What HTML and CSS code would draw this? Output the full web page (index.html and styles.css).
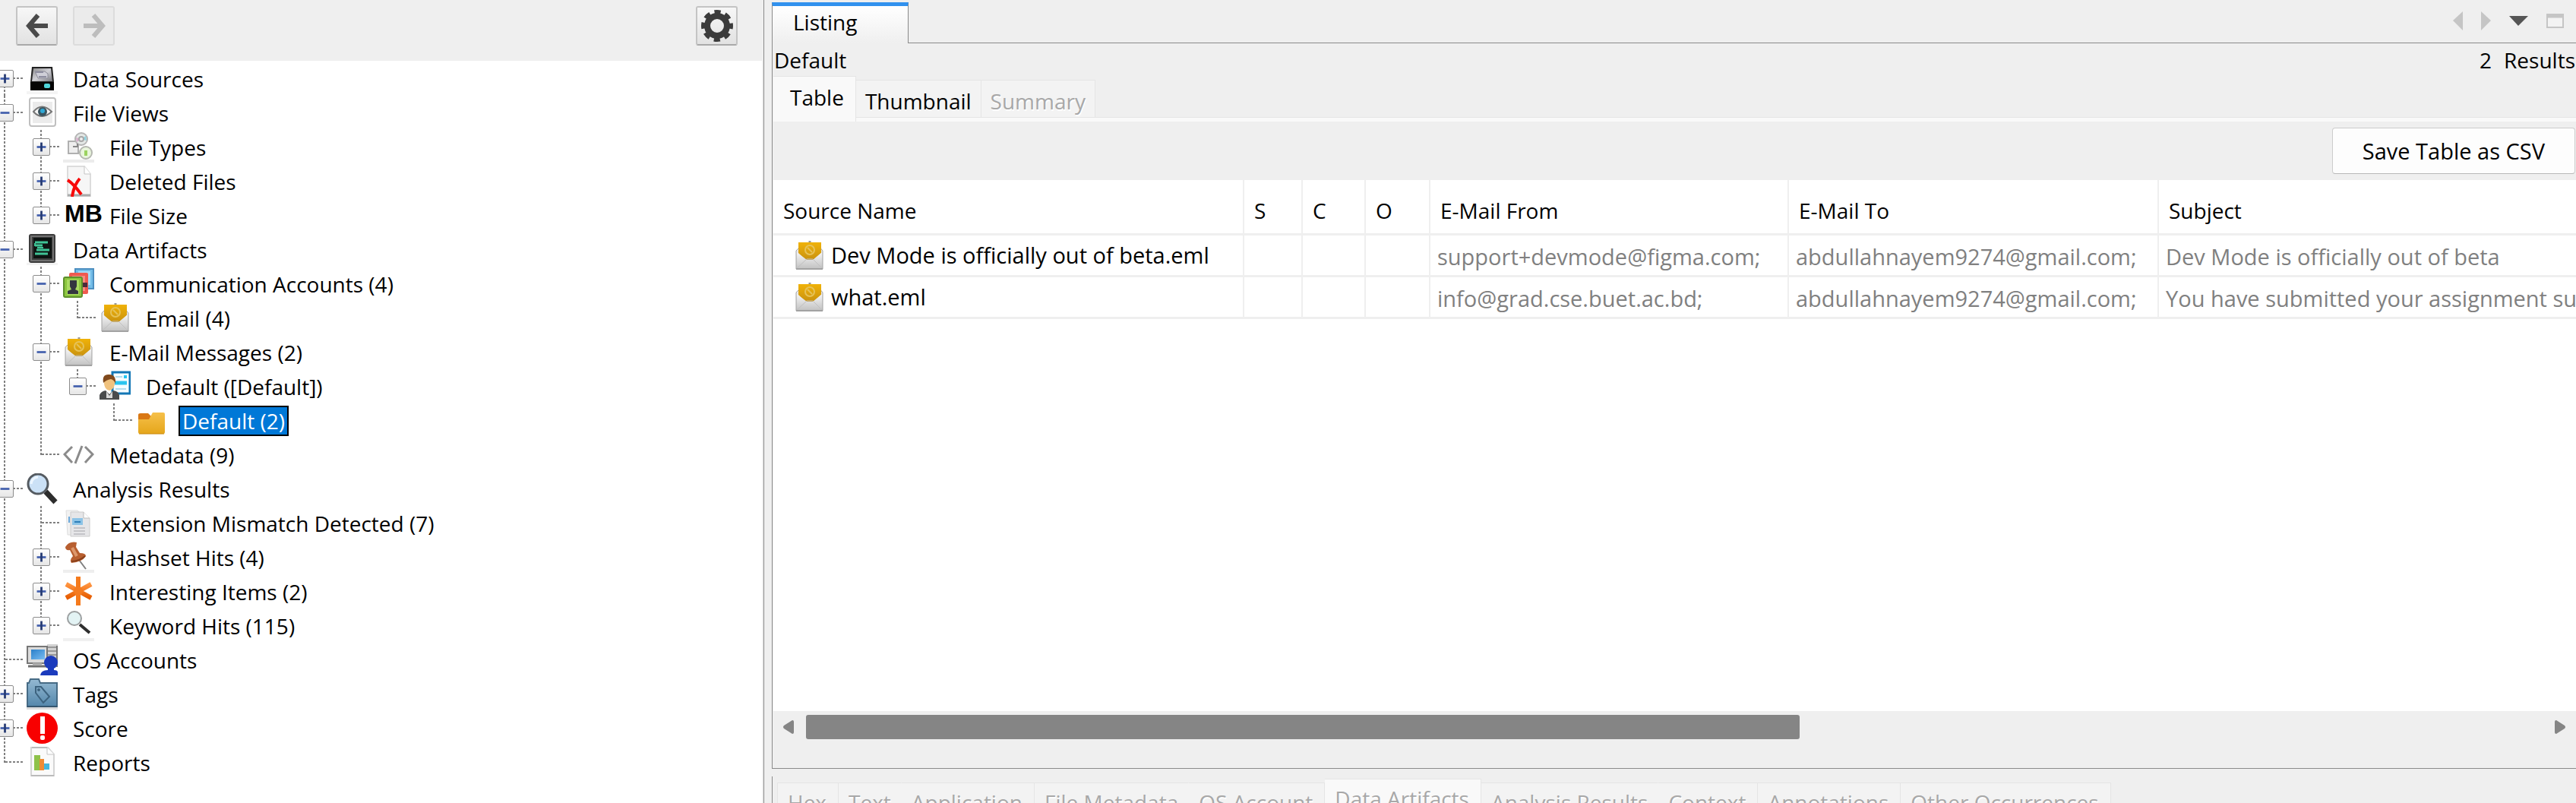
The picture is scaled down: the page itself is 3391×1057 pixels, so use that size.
FILE: index.html
```html
<!DOCTYPE html>
<html lang="en">
<head>
<meta charset="utf-8">
<meta name="viewport" content="width=device-width, initial-scale=1">
<title>Listing</title>
<link rel="stylesheet" href="styles.css">
</head>
<body>
<svg class="sprite" aria-hidden="true">
  <defs>
    <linearGradient id="g-steel" x1="0" y1="0" x2="0" y2="1"><stop offset="0" stop-color="#f6f6f6"/><stop offset="1" stop-color="#c4c4c4"/></linearGradient>
    <linearGradient id="g-gold" x1="0" y1="0" x2="0" y2="1"><stop offset="0" stop-color="#f0b208"/><stop offset="1" stop-color="#c99210"/></linearGradient>
    <linearGradient id="g-orange" x1="0" y1="0" x2="0" y2="1"><stop offset="0" stop-color="#ff9440"/><stop offset="1" stop-color="#e65c00"/></linearGradient>
    <linearGradient id="g-folder" x1="0" y1="0" x2="0" y2="1"><stop offset="0" stop-color="#f6c04a"/><stop offset="1" stop-color="#e5a61b"/></linearGradient>
    <linearGradient id="g-blue" x1="0" y1="0" x2="0" y2="1"><stop offset="0" stop-color="#94b9d2"/><stop offset="1" stop-color="#5487ab"/></linearGradient>
    <linearGradient id="g-drive" x1="0" y1="0" x2="1" y2="1"><stop offset="0" stop-color="#8e8e8e"/><stop offset="0.5" stop-color="#d0d0d6"/><stop offset="1" stop-color="#77777d"/></linearGradient>
    <linearGradient id="g-screen" x1="0" y1="0" x2="1" y2="1"><stop offset="0" stop-color="#2a7fc9"/><stop offset="1" stop-color="#79bdf2"/></linearGradient>
  </defs>
  <symbol id="plus" viewBox="0 0 23 23"><path d="M5 11.500h13" stroke="#4460ad" stroke-width="3"/><path d="M11.500 5v13" stroke="#253a72" stroke-width="3"/></symbol>
  <symbol id="minus" viewBox="0 0 23 23"><path d="M5 11.500h13" stroke="#4460ad" stroke-width="3"/></symbol>
  <symbol id="drive" viewBox="0 0 41 41">
    <rect y="37" width="41" height="4" fill="#f4f4f4"/>
    <path d="M7 5h27l2 20v11H5V25z" fill="#222"/><path d="M9 7h23l2 17H7z" fill="url(#g-drive)"/>
    <path d="M11 11h13l4 3v6H15z" fill="#cfcfd8" stroke="#8a8a96"/><path d="M12 12h10M16 18h10" stroke="#8e8ea0" stroke-width="2"/>
    <rect x="5" y="25" width="31" height="11" fill="#050505"/><rect x="23" y="27" width="8" height="6" rx="2" fill="#4fd5da"/>
  </symbol>
  <symbol id="views" viewBox="0 0 41 41">
    <rect x="4" y="1" width="34" height="37" rx="3" fill="#fff" stroke="#bfbfbf" stroke-width="2"/><rect x="8" y="6" width="26" height="28" fill="#ebebeb"/>
    <path d="M9 19q11-13 24 0q-13 12-24 0z" fill="#f5f5f5" stroke="#777" stroke-width="2"/><circle cx="21" cy="19" r="6" fill="#3b5560"/><circle cx="21" cy="18" r="3" fill="#2fa9d6"/>
  </symbol>
  <symbol id="types" viewBox="0 0 41 41">
    <rect y="37" width="41" height="4" fill="#ececec"/><rect x="7" y="13" width="13" height="16" fill="#eee" stroke="#b0b0b0" stroke-width="2"/>
    <circle cx="24" cy="10" r="8" fill="#e4e8e6" stroke="#b5b5b5" stroke-width="2"/><path d="M24 10l6-4 1 6z" fill="#8fd3e0"/><path d="M24 10l-6 4-1-6z" fill="#d8b0cc"/><circle cx="24" cy="10" r="3" fill="#eee" stroke="#a8a8a8" stroke-width="2"/>
    <path d="M13 20h6v-4" fill="none" stroke="#888" stroke-width="2"/><circle cx="30" cy="28" r="8" fill="#e9f6dc" stroke="#b5b8b0" stroke-width="2"/><path d="M30 25v7" stroke="#9bd35f" stroke-width="4"/>
  </symbol>
  <symbol id="deleted" viewBox="0 0 41 41">
    <path d="M6 1h22l8 10v30H6z" fill="#f6f6f6" stroke="#dcdcdc" stroke-width="2"/><path d="M28 1v10h8" fill="#fff" stroke="#c4c4c4"/><path d="M6 39h30" stroke="#aaa" stroke-width="3"/>
    <path d="M6 19Q14 24 24 38M22 17Q14 26 12 41" fill="none" stroke="#f80808" stroke-width="4"/>
  </symbol>
  <symbol id="artifacts" viewBox="0 0 41 41">
    <rect y="38" width="41" height="3" fill="#f2f2f2"/><rect x="3" y="0" width="35" height="38" rx="3" fill="#3c3c3c"/><rect x="6" y="3" width="29" height="32" fill="none" stroke="#707070" stroke-width="2"/><rect x="9" y="5" width="24" height="27" fill="#0e1412"/>
    <path d="M11 11h17M11 15h10M13 21h17M11 26h17" stroke="#3fc396" stroke-width="3"/><path d="M11 12v4M14 18h8" stroke="#3fc396" stroke-width="2"/>
  </symbol>
  <symbol id="accounts" viewBox="0 0 41 41">
    <rect x="16" y="1" width="24" height="26" fill="#74bde8" stroke="#4d8fc0" stroke-width="2"/><rect x="20" y="4" width="16" height="18" fill="#a5dcf8"/>
    <rect x="8" y="6" width="25" height="28" rx="2" fill="#ef5a50"/><rect x="12" y="10" width="17" height="20" fill="#f58c82"/><rect x="26" y="19" width="6" height="6" fill="#4b2b3b"/>
    <rect x="1" y="12" width="24" height="26" rx="2" fill="#8cc63f" stroke="#5d8f2c" stroke-width="2"/><rect x="5" y="15" width="16" height="20" fill="#aadb62"/>
    <path d="M9 16h9v8l-2 4 4 2v4H6v-4l5-2-2-4z" fill="#34363f"/>
  </symbol>
  <symbol id="mail" viewBox="0 0 41 41">
    <path d="M21 1v4" stroke="#999" stroke-width="3"/><path d="M3 14l7-7h22l6 7v24H3z" fill="url(#g-steel)" stroke="#a5a5a5"/>
    <path d="M6 3h30v14l-9 9h-12l-9-9z" fill="url(#g-gold)"/><circle cx="21" cy="13" r="6" fill="none" stroke="#e6c258" stroke-width="2"/><path d="M18 10l6 6" stroke="#e6c258" stroke-width="2"/>
    <path d="M4 16l13 10h8l12-10v21H4z" fill="url(#g-steel)"/><path d="M4 37l13-12h8l12 12" fill="none" stroke="#c0c0c0"/><path d="M3 38h35" stroke="#a2a2a2" stroke-width="2"/>
  </symbol>
  <symbol id="person" viewBox="0 0 41 41">
    <rect x="17" y="2" width="23" height="28" fill="#f5fcff" stroke="#1276b5" stroke-width="3"/><path d="M21 8h9M21 24h14" stroke="#b3dcee" stroke-width="2"/><path d="M32 8h4" stroke="#24c6f2" stroke-width="4"/><path d="M20 16h16" stroke="#2bc4ee" stroke-width="5"/>
    <ellipse cx="13" cy="16" rx="7" ry="10" fill="#f0c27e"/><path d="M5 16Q3 4 13 5q9 0 8 12-2-5-6-6-6 1-10 5z" fill="#80491c"/>
    <path d="M0 38v-6q2-5 8-6l5 5 5-5q7 1 8 6v6z" fill="#4a4b4c"/><path d="M9 27l4 6 4-6v9H9z" fill="#d9d9d9"/>
  </symbol>
  <symbol id="folder" viewBox="0 0 41 41">
    <path d="M3 13q0-2 3-2h10l4 4v9H3z" fill="#d97814"/><path d="M3 19h14l5-9h14q2 0 2 2v24q0 2-2 2H5q-2 0-2-2z" fill="url(#g-folder)"/><path d="M4 38h33" stroke="#c8880b"/>
  </symbol>
  <symbol id="code" viewBox="0 0 41 41"><path d="M12 10L2 20l10 11M29 10l10 10-10 11M25 9L16 32" fill="none" stroke="#8b8b8b" stroke-width="3"/></symbol>
  <symbol id="magnify" viewBox="0 0 41 41"><path d="M25 24l13 14" stroke="#2d2d2d" stroke-width="7"/><circle cx="15" cy="14" r="13" fill="#cbe1f6" stroke="#555b61" stroke-width="3"/><path d="M6 14q1-8 9-9" stroke="#edf6ff" stroke-width="3" fill="none"/></symbol>
  <symbol id="mismatch" viewBox="0 0 41 41">
    <path d="M4 4h15l8 7v25H6z" fill="#f2f2f2" stroke="#ddd"/><path d="M10 6h17l8 8v24H10z" fill="#e6e6e8" stroke="#ccc"/><path d="M27 6v8h8" fill="#fff" stroke="#bbb"/>
    <path d="M8 12v8" stroke="#6ca9db" stroke-width="2"/><rect x="12" y="14" width="14" height="9" fill="#8cc3e6"/><path d="M15 19h8" stroke="#2e7fb9" stroke-width="2"/><path d="M14 27h15M14 31h15M14 35h15" stroke="#c4c4c8" stroke-width="2"/>
  </symbol>
  <symbol id="pin" viewBox="0 0 41 41"><rect y="37" width="41" height="4" fill="#eee"/><path d="M21 24l9 12" stroke="#808080" stroke-width="2"/><path d="M3 7Q8-1 18 1l-1 6 5 8q8 0 8 4-5 8-19 9-3-4 2-9L9 11q-6 1-6-4z" fill="#b85f30"/><path d="M12 8l6 11" stroke="#dd976b" stroke-width="4"/><path d="M11 26q10 0 18-7" stroke="#88401b" stroke-width="2" fill="none"/></symbol>
  <symbol id="star" viewBox="0 0 41 41"><path d="M4 11l33 18M37 11L4 29" stroke="url(#g-orange)" stroke-width="6"/><path d="M20 1v38" stroke="#f57a1c" stroke-width="6"/><circle cx="20" cy="20" r="6" fill="#f47b20"/></symbol>
  <symbol id="search" viewBox="0 0 41 41"><rect y="37" width="41" height="4" fill="#f0f0f0"/><path d="M22 19l13 11" stroke="#2e2e2e" stroke-width="4"/><circle cx="15" cy="11" r="9" fill="#e3f3f4" stroke="#9c9fa0" stroke-width="2"/></symbol>
  <symbol id="osaccounts" viewBox="0 0 41 41">
    <rect x="27" y="0" width="14" height="30" fill="#d2d2d2"/><path d="M28 4h11M28 9h11M28 14h11" stroke="#999" stroke-width="2"/><path d="M40 2v28" stroke="#777" stroke-width="2"/><rect x="1" y="3" width="26" height="22" fill="#dcdcdc" stroke="#777" stroke-width="2"/><rect x="6" y="7" width="18" height="13" fill="url(#g-screen)"/><path d="M2 29h25" stroke="#6f6f6f" stroke-width="3"/><path d="M8 26h12" stroke="#aaa" stroke-width="3"/>
    <circle cx="32" cy="24" r="9" fill="#1b3bbd"/><path d="M18 41q1-7 10-7v-4h8v4q5 0 5 3v4z" fill="#1b3bbd"/>
  </symbol>
  <symbol id="tags" viewBox="0 0 41 41"><rect y="38" width="41" height="3" fill="#dcdcdc"/><path d="M3 6l2-5h11l2 5h22v31H1V6z" fill="url(#g-blue)" stroke="#476b85" stroke-width="2"/><path d="M12 11h7l11 13-8 8-10-13z" fill="none" stroke="#3c627e" stroke-width="2"/><circle cx="16" cy="15" r="2" fill="#3c627e"/><path d="M1 37h39" stroke="#35566e" stroke-width="2"/></symbol>
  <symbol id="score" viewBox="0 0 41 41"><circle cx="20.500" cy="20.500" r="20.500" fill="#f80000"/><rect x="18" y="5" width="6" height="23" fill="#fff"/><rect x="18" y="30" width="6" height="6" rx="2" fill="#fff"/></symbol>
  <symbol id="reports" viewBox="0 0 41 41"><path d="M6 1h22l8 9v28H6z" fill="#fafafa" stroke="#d5d5d5" stroke-width="2"/><path d="M27 1v9h9" fill="#fff" stroke="#c4c4c4"/><path d="M6 38h30M7 1h20" stroke="#bbb" stroke-width="2"/><rect x="10" y="11" width="8" height="20" fill="#8fc24a"/><rect x="17" y="16" width="6" height="15" fill="#ef8b35"/><rect x="23" y="22" width="7" height="8" fill="#45b7de"/></symbol>
  <symbol id="arrow" viewBox="0 0 30 34"><path d="M16 3L4 17l12 14M5 17h24" fill="none" stroke="currentColor" stroke-width="6"/></symbol>
</svg>

<div class="window">
  <aside class="explorer">
    <div class="toolbar">
      <button class="tool" type="button" aria-label="Back"><svg class="arrow"><use href="#arrow"/></svg></button>
      <button class="tool forward" type="button" aria-label="Forward" disabled><svg class="arrow flipped"><use href="#arrow"/></svg></button>
      <button class="tool settings" type="button" aria-label="Settings"><svg class="gear" viewBox="0 0 42 42"><circle cx="21" cy="21" r="13" fill="none" stroke="#3b3b3b" stroke-width="8"/><circle cx="21" cy="21" r="18" fill="none" stroke="#3b3b3b" stroke-width="6" stroke-dasharray="8 6.137" stroke-dashoffset="4"/></svg></button>
    </div>
    <ul class="tree">
      <li><div class="row"><button class="toggle" type="button" aria-label="Expand"><svg><use href="#plus"/></svg></button><svg class="icon"><use href="#drive"/></svg><span class="label">Data Sources</span></div></li>
      <li><div class="row"><button class="toggle" type="button" aria-label="Collapse"><svg><use href="#minus"/></svg></button><svg class="icon"><use href="#views"/></svg><span class="label">File Views</span></div>
        <ul>
          <li><div class="row"><button class="toggle" type="button" aria-label="Expand"><svg><use href="#plus"/></svg></button><svg class="icon"><use href="#types"/></svg><span class="label">File Types</span></div></li>
          <li><div class="row"><button class="toggle" type="button" aria-label="Expand"><svg><use href="#plus"/></svg></button><svg class="icon"><use href="#deleted"/></svg><span class="label">Deleted Files</span></div></li>
          <li><div class="row"><button class="toggle" type="button" aria-label="Expand"><svg><use href="#plus"/></svg></button><span class="icon unit">MB</span><span class="label">File Size</span></div></li>
        </ul>
      </li>
      <li><div class="row"><button class="toggle" type="button" aria-label="Collapse"><svg><use href="#minus"/></svg></button><svg class="icon"><use href="#artifacts"/></svg><span class="label">Data Artifacts</span></div>
        <ul>
          <li><div class="row"><button class="toggle" type="button" aria-label="Collapse"><svg><use href="#minus"/></svg></button><svg class="icon"><use href="#accounts"/></svg><span class="label">Communication Accounts (4)</span></div>
            <ul><li><div class="row leaf"><svg class="icon"><use href="#mail"/></svg><span class="label">Email (4)</span></div></li></ul>
          </li>
          <li><div class="row"><button class="toggle" type="button" aria-label="Collapse"><svg><use href="#minus"/></svg></button><svg class="icon"><use href="#mail"/></svg><span class="label">E-Mail Messages (2)</span></div>
            <ul><li><div class="row"><button class="toggle" type="button" aria-label="Collapse"><svg><use href="#minus"/></svg></button><svg class="icon"><use href="#person"/></svg><span class="label">Default ([Default])</span></div>
              <ul><li><div class="row leaf"><svg class="icon"><use href="#folder"/></svg><span class="label selected">Default (2)</span></div></li></ul>
            </li></ul>
          </li>
          <li><div class="row leaf"><svg class="icon"><use href="#code"/></svg><span class="label">Metadata (9)</span></div></li>
        </ul>
      </li>
      <li><div class="row"><button class="toggle" type="button" aria-label="Collapse"><svg><use href="#minus"/></svg></button><svg class="icon"><use href="#magnify"/></svg><span class="label">Analysis Results</span></div>
        <ul>
          <li><div class="row leaf"><svg class="icon"><use href="#mismatch"/></svg><span class="label">Extension Mismatch Detected (7)</span></div></li>
          <li><div class="row"><button class="toggle" type="button" aria-label="Expand"><svg><use href="#plus"/></svg></button><svg class="icon"><use href="#pin"/></svg><span class="label">Hashset Hits (4)</span></div></li>
          <li><div class="row"><button class="toggle" type="button" aria-label="Expand"><svg><use href="#plus"/></svg></button><svg class="icon"><use href="#star"/></svg><span class="label">Interesting Items (2)</span></div></li>
          <li><div class="row"><button class="toggle" type="button" aria-label="Expand"><svg><use href="#plus"/></svg></button><svg class="icon"><use href="#search"/></svg><span class="label">Keyword Hits (115)</span></div></li>
        </ul>
      </li>
      <li><div class="row leaf"><svg class="icon"><use href="#osaccounts"/></svg><span class="label">OS Accounts</span></div></li>
      <li><div class="row"><button class="toggle" type="button" aria-label="Expand"><svg><use href="#plus"/></svg></button><svg class="icon"><use href="#tags"/></svg><span class="label">Tags</span></div></li>
      <li><div class="row"><button class="toggle" type="button" aria-label="Expand"><svg><use href="#plus"/></svg></button><svg class="icon"><use href="#score"/></svg><span class="label">Score</span></div></li>
      <li><div class="row leaf"><svg class="icon"><use href="#reports"/></svg><span class="label">Reports</span></div></li>
    </ul>
  </aside>

  <main class="workspace">
    <section class="listing">
      <header class="titlebar">
        <button class="doc-tab" type="button">Listing</button>
        <div class="window-controls">
          <button type="button" aria-label="Previous tab" disabled><svg width="13" height="25"><path d="M13 0v25L0 12z" fill="#c5c5c5"/></svg></button>
          <button type="button" aria-label="Next tab" disabled><svg width="13" height="25"><path d="M0 0v25l13-13z" fill="#c5c5c5"/></svg></button>
          <button type="button" aria-label="Show tab list"><svg width="25" height="13"><path d="M0 0h25L12 13z" fill="#555"/></svg></button>
          <button type="button" aria-label="Maximize" disabled><svg width="23" height="19"><path d="M1 1h21v17H1z" fill="#f3f3f3" stroke="#c5c5c5" stroke-width="2"/><path d="M0 3h23" stroke="#c5c5c5" stroke-width="5"/></svg></button>
        </div>
      </header>
      <div class="listing-body">
        <div class="summary-line"><span>Default</span><span class="results">2<span>Results</span></span></div>
        <nav class="view-tabs">
          <button class="view-tab active" type="button">Table</button>
          <button class="view-tab" type="button">Thumbnail</button>
          <button class="view-tab" type="button" disabled>Summary</button>
        </nav>
        <div class="actions"><button class="save" type="button">Save Table as CSV</button></div>
        <div class="table-area">
          <table class="results-table">
            <colgroup><col class="c-name"><col class="c-s"><col class="c-c"><col class="c-o"><col class="c-from"><col class="c-to"><col></colgroup>
            <thead><tr><th scope="col">Source Name</th><th scope="col">S</th><th scope="col">C</th><th scope="col">O</th><th scope="col">E-Mail From</th><th scope="col">E-Mail To</th><th scope="col">Subject</th></tr></thead>
            <tbody>
              <tr><td class="name"><div><svg class="icon"><use href="#mail"/></svg>Dev Mode is officially out of beta.eml</div></td><td></td><td></td><td></td><td>support+devmode@figma.com;</td><td>abdullahnayem9274@gmail.com;</td><td>Dev Mode is officially out of beta</td></tr>
              <tr><td class="name"><div><svg class="icon"><use href="#mail"/></svg>what.eml</div></td><td></td><td></td><td></td><td>info@grad.cse.buet.ac.bd;</td><td>abdullahnayem9274@gmail.com;</td><td>You have submitted your assignment sub</td></tr>
            </tbody>
          </table>
        </div>
        <div class="scrollbar">
          <button type="button" aria-label="Scroll left"><svg width="14" height="18"><path d="M12 0q2 0 2 2v14q0 2-2 2L1 11q-2-2 0-4z" fill="#858585"/></svg></button>
          <div class="track"><div class="thumb" style="width: 57.2%"></div></div>
          <button type="button" aria-label="Scroll right"><svg width="14" height="18"><path d="M2 0Q0 0 0 2v14q0 2 2 2l11-7q2-2 0-4z" fill="#858585"/></svg></button>
        </div>
      </div>
    </section>
    <nav class="content-tabs">
      <button class="content-tab" type="button" disabled>Hex</button>
      <button class="content-tab joined" type="button" disabled>Text</button>
      <button class="content-tab" type="button" disabled>Application</button>
      <button class="content-tab joined" type="button" disabled>File Metadata</button>
      <button class="content-tab" type="button" disabled>OS Account</button>
      <button class="content-tab current" type="button" disabled>Data Artifacts</button>
      <button class="content-tab joined" type="button" disabled>Analysis Results</button>
      <button class="content-tab" type="button" disabled>Context</button>
      <button class="content-tab" type="button" disabled>Annotations</button>
      <button class="content-tab" type="button" disabled>Other Occurrences</button>
    </nav>
  </main>
</div>
</body>
</html>
```
FILE: styles.css
```css
* { box-sizing: border-box; }

body {
  margin: 0;
  background: #efefef;
  color: #000;
  font: 28px/36px "Open Sans", "Noto Sans", sans-serif;
}

button {
  margin: 0;
  padding: 0;
  border: 0;
  background: none;
  color: inherit;
  font: inherit;
  white-space: nowrap;
}

svg { display: block; flex: none; }
.sprite { position: absolute; width: 0; height: 0; }

.window {
  display: grid;
  grid-template-columns: minmax(0, 1006fr) minmax(0, 2385fr);
  height: 100vh;
  overflow: hidden;
}

/* Explorer */
.explorer {
  display: flex;
  flex-direction: column;
  min-height: 0;
  border-right: 1px solid #8a8a8a;
}

.toolbar {
  display: flex;
  gap: 20px;
  height: 80px;
  flex: none;
  padding: 8px 34px 0 21px;
}

.tool {
  display: grid;
  place-items: center;
  width: 55px;
  height: 52px;
  border: 2px solid #c4c4c4;
  border-bottom-color: #a9a9a9;
  border-radius: 3px;
  background: linear-gradient(#f7f7f7, #e2e2e2);
  color: #4a4a4a;
}
.tool.forward { border-color: #dcdcdc; background: #ebebeb; color: #bdbdbd; }
.tool.settings { margin-left: auto; }
.arrow { width: 30px; height: 34px; }
.flipped { transform: scaleX(-1); }
.gear { width: 42px; height: 42px; }

.tree {
  flex: 1;
  margin: 0 2px 0 0;
  padding: 1px 0 0;
  overflow: hidden;
  background: #fff;
  list-style: none;
}
.tree > li { margin-left: -13px; }
.tree ul { margin: 0; padding: 0 0 0 48px; list-style: none; }

.tree li {
  background: repeating-linear-gradient(#808080 0 3px, transparent 3px 5px) 18px 0 / 2px 100% no-repeat;
}
.tree > li:first-child { background-position: 18px 22px; }
.tree li:last-child { background-size: 2px 24px; }

.row {
  display: flex;
  align-items: center;
  height: 45px;
  padding-left: 8px;
  background: repeating-linear-gradient(90deg, #808080 0 3px, transparent 3px 5px) 20px 21px / 23px 2px no-repeat;
}
.row.leaf { padding-left: 48px; }

.toggle {
  width: 23px;
  height: 23px;
  margin-right: 17px;
  border: 1px solid #8c8c8c;
  border-radius: 2px;
  background: linear-gradient(#fff, #e6e6e6);
}
.toggle svg { width: 21px; height: 21px; }

.icon { flex: none; width: 41px; height: 41px; margin-right: 15px; }
.unit { overflow: visible; padding-left: 2px; font: bold 32px/36px "Liberation Sans", sans-serif; }

.label { padding: 0 3px; border: 2px solid transparent; white-space: nowrap; }
.selected { border-color: #000; background: #0078d7; color: #fff; }

/* Listing */
.workspace { display: flex; flex-direction: column; min-width: 0; padding-left: 10px; }

.listing { display: flex; flex: 1; flex-direction: column; min-height: 0; padding-top: 3px; }

.titlebar { display: flex; height: 54px; flex: none; }
.doc-tab {
  width: 180px;
  padding: 0 0 7px 27px;
  border: 1px solid #8a8a8a;
  border-top: 5px solid #3191ee;
  border-bottom: 0;
  background: linear-gradient(#fff, #efefef);
  text-align: left;
}
.window-controls {
  display: flex;
  flex: 1;
  gap: 24px;
  align-items: center;
  justify-content: flex-end;
  padding: 0 16px 4px 0;
  border-bottom: 1px solid #8a8a8a;
}

.listing-body {
  display: flex;
  flex: 1;
  flex-direction: column;
  min-height: 0;
  padding: 4px 0 35px 1px;
  border: solid #8a8a8a;
  border-width: 0 0 1px 1px;
}

.summary-line { display: flex; justify-content: space-between; height: 39px; padding: 0 1px; }
.results { display: flex; gap: 16px; }

.view-tabs { display: flex; align-items: flex-end; height: 60px; border-bottom: 5px solid #f9f9f9; }
.view-tab {
  height: 50px;
  padding: 5px 12px 0;
  border: 1px solid #e5e5e5;
  border-left: 0;
  background: #f3f3f3;
}
.view-tab.active { height: 60px; margin-bottom: -5px; padding: 0 15px 5px 22px; background: #f9f9f9; border-bottom: 0; }
.view-tabs::after { content: ""; flex: 1; border-bottom: 1px solid #e5e5e5; }

.view-tab:disabled, .content-tab:disabled { color: #a8a8a8; text-shadow: 1px 2px #fff; }

.actions { display: flex; justify-content: flex-end; padding: 8px 1px; }
.save {
  height: 61px;
  padding: 0 39px;
  border: 1px solid #ccc;
  border-bottom-color: #b8b8b8;
  border-radius: 4px;
  background: #fdfdfd;
  font-size: 29px;
}

.table-area { flex: 1; min-height: 0; overflow: hidden; background: #fff; }
.results-table { width: 100%; table-layout: fixed; border-collapse: separate; border-spacing: 0; }
.c-name { width: 620px; }
.c-s { width: 77px; }
.c-c { width: 83px; }
.c-o { width: 85px; }
.c-from { width: 472px; }
.c-to { width: 487px; }

.results-table th, .results-table td {
  overflow: hidden;
  border: solid #efefef;
  border-width: 0 2px 3px 0;
  text-align: left;
  white-space: nowrap;
}
.results-table th { height: 73px; padding: 10px 0 0 13px; font-weight: 400; }
.results-table td { height: 55px; padding: 3px 0 0 9px; color: #808080; font-size: 29px; }
.results-table th:last-child, .results-table td:last-child { border-right: 0; }
.results-table .name { padding: 0 0 0 27px; color: #000; }
.name div { display: flex; align-items: center; }
.name .icon { margin-right: 8px; }

.scrollbar { display: flex; align-items: center; gap: 16px; height: 40px; flex: none; padding: 2px 14px 0 13px; }
.track { flex: 1; height: 32px; }
.thumb { height: 32px; border-radius: 3px; background: #858585; }

/* Lower content viewer */
.content-tabs {
  display: flex;
  align-items: flex-start;
  flex: none;
  height: 35px;
  margin-top: 10px;
  padding: 8px 0 0 6px;
  overflow: hidden;
  border-left: 1px solid #8a8a8a;
}
.content-tab {
  height: 56px;
  padding: 0 15px 5px 13px;
  border: 1px solid #e5e5e5;
  border-left: 0;
  background: #f3f3f3;
}
.content-tab.joined { padding-right: 13px; border-right-color: #f3f3f3; }
.content-tab:first-child { border-left: 1px solid #e5e5e5; }
.content-tab.current { height: 60px; margin-top: -5px; padding-bottom: 9px; background: #f9f9f9; }
```
